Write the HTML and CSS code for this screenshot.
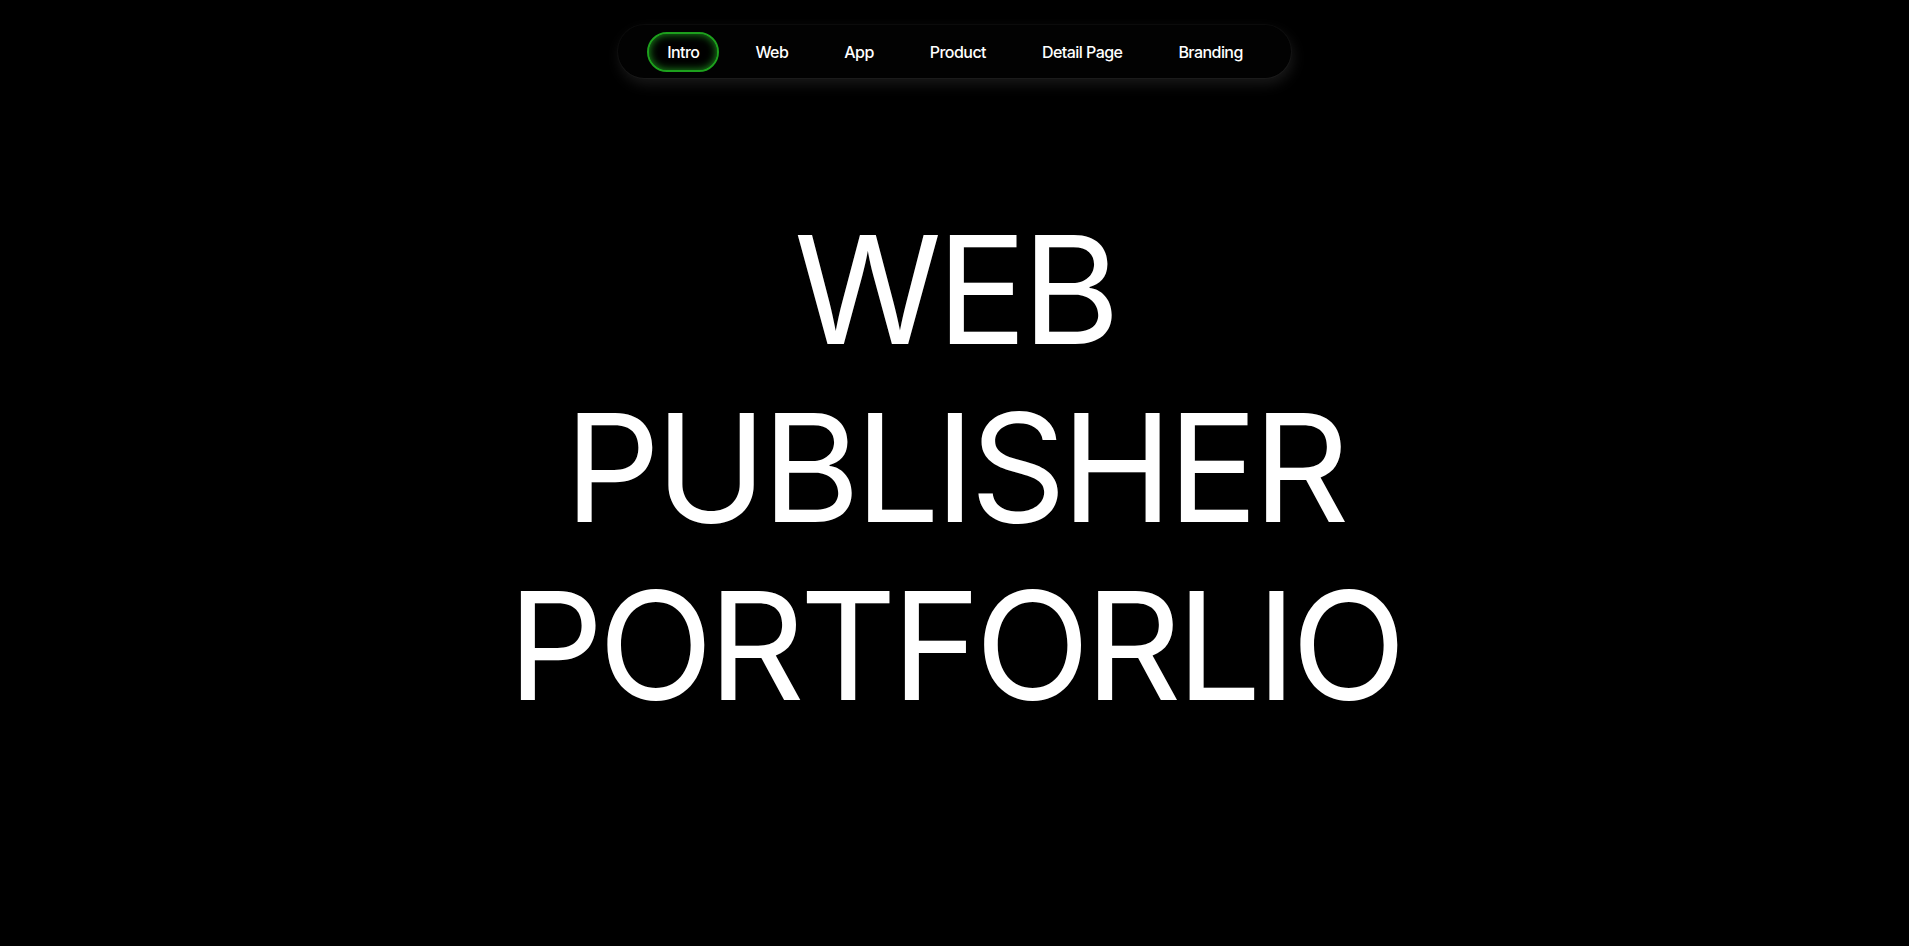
FILE: index.html
```html
<!DOCTYPE html>
<html lang="en">
<head>
<meta charset="utf-8">
<title>Web Publisher Portfolio</title>
<link rel="stylesheet" href="styles.css">
</head>
<body>
<div class="page">
  <header class="top">
    <nav class="nav">
      <a class="nav-item active" href="#intro">Intro</a>
      <a class="nav-item" href="#web">Web</a>
      <a class="nav-item" href="#app">App</a>
      <a class="nav-item" href="#product">Product</a>
      <a class="nav-item" href="#detail">Detail Page</a>
      <a class="nav-item" href="#branding">Branding</a>
    </nav>
  </header>
  <main class="hero">
    <h1 class="title">WEB<br>PUBLISHER<br>PORTFORLIO</h1>
  </main>
</div>
</body>
</html>
```

FILE: styles.css
```css
* { box-sizing: border-box; }
html, body {
  margin: 0;
  padding: 0;
  background: #000;
  color: #fff;
  font-family: Inter, "Noto Sans", sans-serif;
}
.page {
  height: 946px;
  overflow: hidden;
  display: flex;
  flex-direction: column;
  align-items: center;
}
.top {
  padding-top: 25px;
}
.nav {
  display: flex;
  align-items: center;
  gap: 16px;
  height: 53px;
  padding: 0 28px 0 29px;
  background: #020202;
  border-radius: 27px;
  box-shadow: 0 0 0 1px rgba(255,255,255,0.03), 2px 6px 14px rgba(255,255,255,0.1);
}
.nav-item {
  display: flex;
  align-items: center;
  height: 40px;
  padding: 0 20px;
  border-radius: 20px;
  color: #fff;
  text-decoration: none;
  font-size: 16px;
  font-weight: 500;
  letter-spacing: -0.55px;
}
.nav-item.active {
  border: 2px solid #1da01d;
  padding: 0 18px;
  background: #000;
  box-shadow: inset 0 0 9px rgba(40,200,40,0.75);
}
.hero {
  padding-top: 123px;
}
.title {
  margin: 0;
  text-align: center;
  font-size: 150px;
  line-height: 178px;
  font-weight: 400;
  letter-spacing: -5px;
}
```
